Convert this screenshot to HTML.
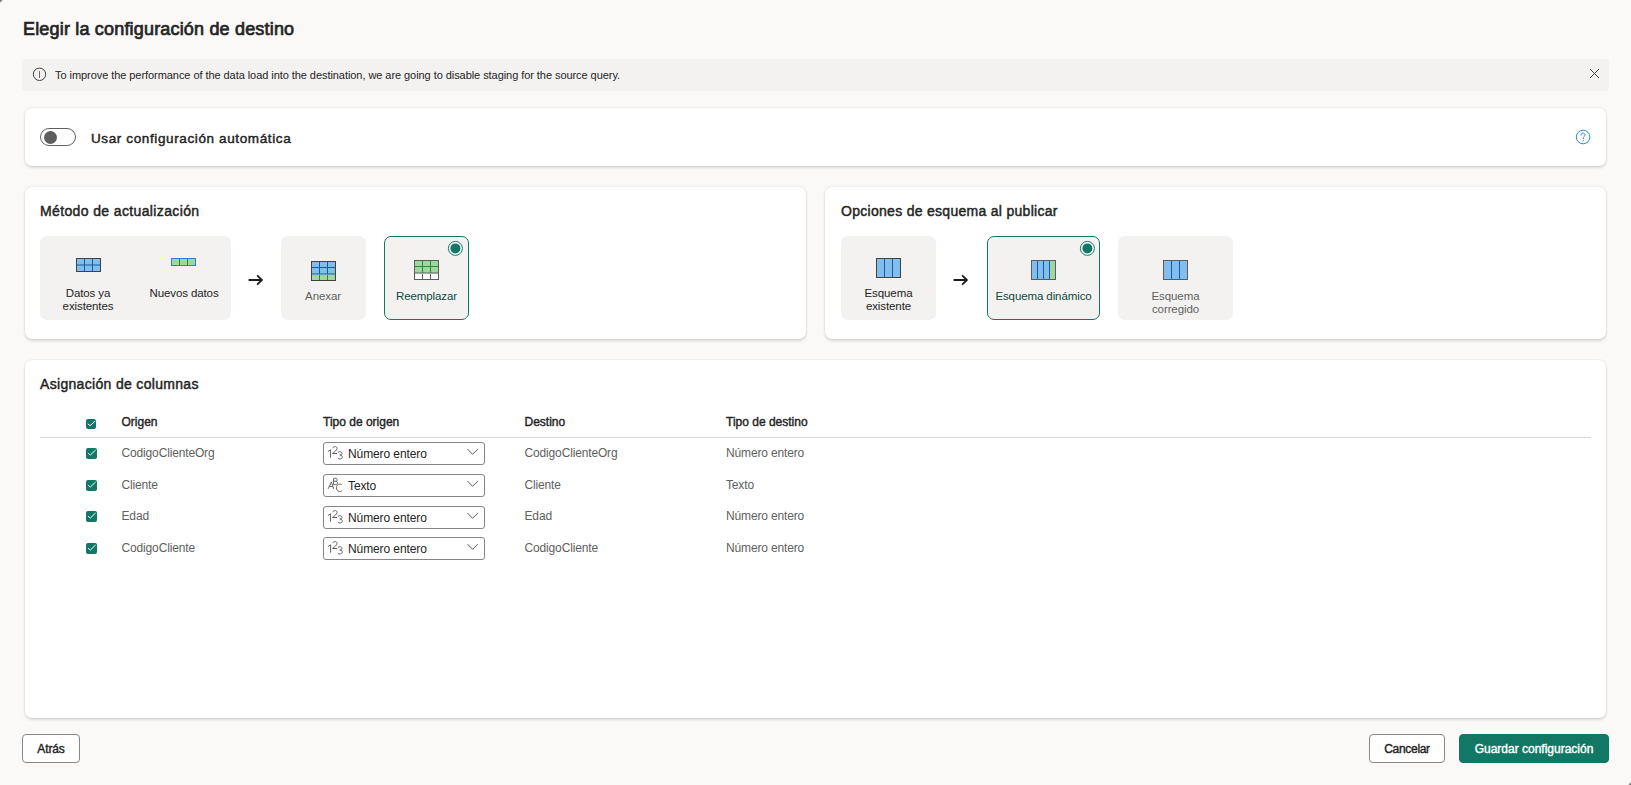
<!DOCTYPE html>
<html><head><meta charset="utf-8">
<style>
*{box-sizing:border-box;margin:0;padding:0}
html,body{width:1631px;height:785px;overflow:hidden;background:#faf9f8;font-family:"Liberation Sans",sans-serif;color:#242424}
.abs{position:absolute}
.sb{-webkit-text-stroke:0.45px currentColor}
svg.abs{display:block}
.t{position:absolute;white-space:nowrap;line-height:1}
.card{position:absolute;background:#fff;border-radius:7px;box-shadow:0 0 2px rgba(0,0,0,.14),0 2px 3px rgba(0,0,0,.12)}
.tile{position:absolute;background:#f3f2f1;border-radius:7px}
.tile.sel{border:1px solid #117865}
.lbl{position:absolute;font-size:11.5px;letter-spacing:-0.1px;line-height:13px;text-align:center;white-space:nowrap}
.hdr{position:absolute;font-size:12px;-webkit-text-stroke:0.4px currentColor;color:#242424;white-space:nowrap;line-height:1}
.cell{position:absolute;font-size:12px;letter-spacing:-0.15px;color:#616161;white-space:nowrap;line-height:1}
.dd{position:absolute;left:323px;width:162px;height:23px;border:1px solid #858585;border-radius:3px;background:#fff}
.ddt{position:absolute;left:24px;top:5px;font-size:12px;letter-spacing:-0.1px;line-height:1;color:#242424;white-space:nowrap}
.btn{position:absolute;height:29px;border:1px solid #8a8886;border-radius:4px;background:#fff;font-size:12px;-webkit-text-stroke:0.4px currentColor;display:flex;align-items:center;justify-content:center;color:#242424}
</style></head>
<body>
<!-- title -->
<div class="t" style="left:23px;top:20.3px;font-size:18px;letter-spacing:0.18px;-webkit-text-stroke:0.7px #242424">Elegir la configuración de destino</div>

<!-- info bar -->
<div class="abs" style="left:22px;top:59px;width:1587px;height:32px;background:#f3f2f1;border-radius:3px"></div>
<svg class="abs" style="left:32px;top:67px" width="15" height="15" viewBox="0 0 15 15"><circle cx="7.5" cy="7.3" r="6.2" fill="none" stroke="#424242" stroke-width="1"/><line x1="7.5" y1="4" x2="7.5" y2="11" stroke="#6b4f6b" stroke-width="0.9"/></svg>
<div class="t" style="left:55px;top:70.2px;font-size:11px;color:#242424;letter-spacing:-0.06px">To improve the performance of the data load into the destination, we are going to disable staging for the source query.</div>
<svg class="abs" style="left:1589px;top:68px" width="11" height="11" viewBox="0 0 11 11"><path d="M1 1L10 10M10 1L1 10" stroke="#424242" stroke-width="1"/></svg>

<!-- card 1 -->
<div class="card" style="left:25px;top:108px;width:1581px;height:58px"></div>
<div class="abs" style="left:40px;top:128px;width:36px;height:18px;border:1px solid #616161;border-radius:9px;background:#fff"></div>
<div class="abs" style="left:44px;top:131px;width:13px;height:13px;border-radius:50%;background:#5f5e5d"></div>
<div class="t" style="left:91px;top:132px;font-size:13.5px;letter-spacing:0.62px;-webkit-text-stroke:0.45px #242424">Usar configuración automática</div>
<svg class="abs" style="left:1575px;top:129.3px" width="16" height="16" viewBox="0 0 16 16"><circle cx="8.1" cy="8" r="6.8" fill="none" stroke="#2b88d8" stroke-width="1"/><path d="M6.1 6.1C6.1 4.9 7 4.1 8.1 4.1C9.2 4.1 10 4.9 10 5.9C10 7.3 8.3 7.6 8.3 9.5" fill="none" stroke="#2b88d8" stroke-width="1" stroke-linecap="round"/><circle cx="8.3" cy="11.6" r="0.65" fill="#2b88d8"/></svg>

<!-- card 2 -->
<div class="card" style="left:25px;top:187px;width:781px;height:152px"></div>
<div class="t sb" style="left:40px;top:204px;font-size:14px;letter-spacing:0.37px">Método de actualización</div>
<div class="tile" style="left:40px;top:236px;width:191px;height:84px"></div>
<svg class="abs" style="left:76px;top:258px" width="25" height="14" viewBox="0 0 25 14"><rect x="0.5" y="0.5" width="24" height="13" fill="#83bdec" stroke="#424242"/><path d="M8.5 1V13M16.5 1V13M1 7H24" stroke="#0f5cb0" stroke-width="1"/></svg>
<svg class="abs" style="left:171px;top:258px" width="25" height="8" viewBox="0 0 25 8"><rect x="0.5" y="0.5" width="24" height="7" fill="#9fd89f" stroke="#2f7fd0"/><path d="M8.5 1V7M16.5 1V7" stroke="#2e8b3e" stroke-width="1"/></svg>
<div class="lbl" style="left:48px;width:80px;top:287.2px;color:#242424">Datos ya<br>existentes</div>
<div class="lbl" style="left:144px;width:80px;top:287.2px;color:#242424">Nuevos datos</div>
<svg class="abs" style="left:248px;top:274px" width="16" height="12" viewBox="0 0 16 12"><path d="M0.6 6H13.4M9.1 1.4L13.9 6L9.1 10.6" fill="none" stroke="#1b1b1b" stroke-width="1.8"/></svg>
<div class="tile" style="left:281px;top:236px;width:85px;height:84px"></div>
<svg class="abs" style="left:311px;top:261px" width="25" height="20" viewBox="0 0 25 20"><rect x="0.5" y="0.5" width="24" height="13" fill="#83bdec"/><rect x="0.5" y="13.5" width="24" height="6" fill="#9fd89f"/><path d="M8.5 1V13M16.5 1V13M1 6.5H24M1 13H24" stroke="#0f5cb0" stroke-width="1"/><path d="M8.5 14V19M16.5 14V19" stroke="#2e8b3e" stroke-width="1"/><rect x="0.5" y="0.5" width="24" height="19" fill="none" stroke="#424242"/></svg>
<div class="lbl" style="left:283px;width:80px;top:289.5px;color:#616161">Anexar</div>
<div class="tile sel" style="left:384px;top:236px;width:85px;height:84px"></div>
<svg class="abs" style="left:447px;top:240px" width="17" height="17" viewBox="0 0 17 17"><circle cx="8.4" cy="8.4" r="7" fill="#fff" stroke="#117865" stroke-width="1"/><circle cx="8.4" cy="8.4" r="5" fill="#117865"/></svg>
<svg class="abs" style="left:414px;top:260px" width="25" height="20" viewBox="0 0 25 20"><rect x="0.5" y="0.5" width="24" height="13" fill="#9fd89f"/><rect x="0.5" y="13.5" width="24" height="6" fill="#fafafa"/><path d="M8.5 1V13M16.5 1V13M1 6.5H24" stroke="#2e8b3e" stroke-width="1"/><path d="M1 13H24M8.5 14V19M16.5 14V19" stroke="#616161" stroke-width="1"/><rect x="0.5" y="0.5" width="24" height="19" fill="none" stroke="#5c5c5c"/></svg>
<div class="lbl" style="left:386.5px;width:80px;top:289.5px;color:#0c4a3e">Reemplazar</div>

<!-- card 3 -->
<div class="card" style="left:825px;top:187px;width:781px;height:152px"></div>
<div class="t sb" style="left:841px;top:204px;font-size:14px;letter-spacing:0.29px">Opciones de esquema al publicar</div>
<div class="tile" style="left:841px;top:236px;width:95px;height:84px"></div>
<svg class="abs" style="left:876px;top:258px" width="25" height="20" viewBox="0 0 25 20"><rect x="0.5" y="0.5" width="24" height="19" fill="#83bdec" stroke="#424242"/><path d="M8.5 1V19M16.5 1V19" stroke="#0f5cb0" stroke-width="1"/></svg>
<div class="lbl" style="left:848.5px;width:80px;top:287.2px;color:#242424">Esquema<br>existente</div>
<svg class="abs" style="left:953px;top:274px" width="16" height="12" viewBox="0 0 16 12"><path d="M0.6 6H13.4M9.1 1.4L13.9 6L9.1 10.6" fill="none" stroke="#1b1b1b" stroke-width="1.8"/></svg>
<div class="tile sel" style="left:987px;top:236px;width:113px;height:84px"></div>
<svg class="abs" style="left:1078.5px;top:240px" width="17" height="17" viewBox="0 0 17 17"><circle cx="8.4" cy="8.4" r="7" fill="#fff" stroke="#117865" stroke-width="1"/><circle cx="8.4" cy="8.4" r="5" fill="#117865"/></svg>
<svg class="abs" style="left:1031px;top:260px" width="25" height="20" viewBox="0 0 25 20"><rect x="0.5" y="0.5" width="24" height="19" fill="#83bdec"/><rect x="18.5" y="0.5" width="6" height="19" fill="#9fd89f"/><path d="M6.5 1V19M12.5 1V19M18.5 1V19" stroke="#0f5cb0" stroke-width="1"/><rect x="0.5" y="0.5" width="24" height="19" fill="none" stroke="#5c5c5c"/></svg>
<div class="lbl" style="left:993.5px;width:100px;top:289.5px;color:#0c4a3e">Esquema dinámico</div>
<div class="tile" style="left:1118px;top:236px;width:115px;height:84px"></div>
<svg class="abs" style="left:1163px;top:260px" width="25" height="20" viewBox="0 0 25 20"><rect x="0.5" y="0.5" width="24" height="19" fill="#83bdec" stroke="#5c5c5c"/><path d="M8.5 1V19M16.5 1V19" stroke="#0f5cb0" stroke-width="1"/></svg>
<div class="lbl" style="left:1135.5px;width:80px;top:290.3px;color:#616161">Esquema<br>corregido</div>

<!-- card 4 -->
<div class="card" style="left:25px;top:360px;width:1581px;height:358px"></div>
<div class="t sb" style="left:40px;top:377px;font-size:14px;letter-spacing:0.32px">Asignación de columnas</div>

<div class="hdr" style="left:121.5px;top:415.8px">Origen</div>
<div class="hdr" style="left:323px;top:415.8px">Tipo de origen</div>
<div class="hdr" style="left:524.5px;top:415.8px">Destino</div>
<div class="hdr" style="left:726px;top:415.8px">Tipo de destino</div>
<div class="abs" style="left:40px;top:437px;width:1551px;height:1px;background:#d6d6d6"></div>
<div class="abs" style="left:86px;top:419px;width:10px;height:10px;background:#117865;border-radius:2px;overflow:hidden"><svg width="10" height="10" viewBox="0 0 10 10" style="display:block"><path d="M1.8 4.9L4.2 6.7L9.3 1.9" fill="none" stroke="#fff" stroke-width="1"/></svg></div>
<div class="abs" style="left:86px;top:448.0px;width:11px;height:11px;background:#117865;border-radius:2px"><svg width="11" height="11" viewBox="0 0 11 11" style="display:block"><path d="M1.9 5L4.3 7.1L9.6 2" fill="none" stroke="#fff" stroke-width="1"/></svg></div>
<div class="cell" style="left:121.5px;top:446.9px">CodigoClienteOrg</div>
<div class="dd" style="top:442.2px"><svg class="abs" style="left:-1px;top:-1px" width="24" height="22" viewBox="0 0 24 22" fill="none" stroke="#5c5c5c" stroke-width="0.95"><path d="M4.9 9.6L7.6 7.8V15.7"/><path d="M9.6 6.2C10.2 5 11.3 4.6 12.2 4.6C13.3 4.6 14 5.4 14 6.4C14 7.4 13.4 8.1 12.6 8.9L9.5 11.5H14.2"/><path d="M15 10.4C15.6 9.9 16.3 9.7 17 9.7C18.2 9.7 19 10.4 19 11.3C19 12.3 18.1 13 16.7 13C18.3 13 19.3 13.8 19.3 14.9C19.3 16.1 18.3 17 16.9 17C16.1 17 15.4 16.8 14.9 16.4"/></svg><div class="ddt">Número entero</div><svg class="abs" style="left:143px;top:5.3px" width="12" height="8" viewBox="0 0 12 8"><path d="M0.5 1.1L5.6 6.3L10.8 1.1" fill="none" stroke="#424242" stroke-width="0.9"/></svg></div>
<div class="cell" style="left:524.5px;top:446.9px">CodigoClienteOrg</div>
<div class="cell" style="left:726px;top:446.9px">Número entero</div>
<div class="abs" style="left:86px;top:479.6px;width:11px;height:11px;background:#117865;border-radius:2px"><svg width="11" height="11" viewBox="0 0 11 11" style="display:block"><path d="M1.9 5L4.3 7.1L9.6 2" fill="none" stroke="#fff" stroke-width="1"/></svg></div>
<div class="cell" style="left:121.5px;top:478.6px">Cliente</div>
<div class="dd" style="top:473.8px"><svg class="abs" style="left:-1px;top:-1px" width="24" height="22" viewBox="0 0 24 22" fill="none" stroke="#5c5c5c" stroke-width="0.95"><path d="M5.1 14.85L8.4 7.95L10.7 14.85M6.3 12.4H10"/><path d="M10.6 10.6V4.3H12.5C13.6 4.3 14.2 4.9 14.2 5.8C14.2 6.7 13.5 7.3 12.5 7.3H10.6M12.5 7.3C13.8 7.3 14.6 8 14.6 9C14.6 10 13.8 10.6 12.7 10.6H10.6"/><path d="M18.7 10.6C18.2 10.2 17.5 10.1 16.8 10.1C14.8 10.1 13.4 11.6 13.4 13.8C13.4 16 14.8 17.5 16.7 17.5C17.5 17.5 18.3 17.3 18.9 16.9"/></svg><div class="ddt">Texto</div><svg class="abs" style="left:143px;top:5.3px" width="12" height="8" viewBox="0 0 12 8"><path d="M0.5 1.1L5.6 6.3L10.8 1.1" fill="none" stroke="#424242" stroke-width="0.9"/></svg></div>
<div class="cell" style="left:524.5px;top:478.6px">Cliente</div>
<div class="cell" style="left:726px;top:478.6px">Texto</div>
<div class="abs" style="left:86px;top:511.3px;width:11px;height:11px;background:#117865;border-radius:2px"><svg width="11" height="11" viewBox="0 0 11 11" style="display:block"><path d="M1.9 5L4.3 7.1L9.6 2" fill="none" stroke="#fff" stroke-width="1"/></svg></div>
<div class="cell" style="left:121.5px;top:510.2px">Edad</div>
<div class="dd" style="top:505.5px"><svg class="abs" style="left:-1px;top:-1px" width="24" height="22" viewBox="0 0 24 22" fill="none" stroke="#5c5c5c" stroke-width="0.95"><path d="M4.9 9.6L7.6 7.8V15.7"/><path d="M9.6 6.2C10.2 5 11.3 4.6 12.2 4.6C13.3 4.6 14 5.4 14 6.4C14 7.4 13.4 8.1 12.6 8.9L9.5 11.5H14.2"/><path d="M15 10.4C15.6 9.9 16.3 9.7 17 9.7C18.2 9.7 19 10.4 19 11.3C19 12.3 18.1 13 16.7 13C18.3 13 19.3 13.8 19.3 14.9C19.3 16.1 18.3 17 16.9 17C16.1 17 15.4 16.8 14.9 16.4"/></svg><div class="ddt">Número entero</div><svg class="abs" style="left:143px;top:5.3px" width="12" height="8" viewBox="0 0 12 8"><path d="M0.5 1.1L5.6 6.3L10.8 1.1" fill="none" stroke="#424242" stroke-width="0.9"/></svg></div>
<div class="cell" style="left:524.5px;top:510.2px">Edad</div>
<div class="cell" style="left:726px;top:510.2px">Número entero</div>
<div class="abs" style="left:86px;top:542.9px;width:11px;height:11px;background:#117865;border-radius:2px"><svg width="11" height="11" viewBox="0 0 11 11" style="display:block"><path d="M1.9 5L4.3 7.1L9.6 2" fill="none" stroke="#fff" stroke-width="1"/></svg></div>
<div class="cell" style="left:121.5px;top:541.9px">CodigoCliente</div>
<div class="dd" style="top:537.1px"><svg class="abs" style="left:-1px;top:-1px" width="24" height="22" viewBox="0 0 24 22" fill="none" stroke="#5c5c5c" stroke-width="0.95"><path d="M4.9 9.6L7.6 7.8V15.7"/><path d="M9.6 6.2C10.2 5 11.3 4.6 12.2 4.6C13.3 4.6 14 5.4 14 6.4C14 7.4 13.4 8.1 12.6 8.9L9.5 11.5H14.2"/><path d="M15 10.4C15.6 9.9 16.3 9.7 17 9.7C18.2 9.7 19 10.4 19 11.3C19 12.3 18.1 13 16.7 13C18.3 13 19.3 13.8 19.3 14.9C19.3 16.1 18.3 17 16.9 17C16.1 17 15.4 16.8 14.9 16.4"/></svg><div class="ddt">Número entero</div><svg class="abs" style="left:143px;top:5.3px" width="12" height="8" viewBox="0 0 12 8"><path d="M0.5 1.1L5.6 6.3L10.8 1.1" fill="none" stroke="#424242" stroke-width="0.9"/></svg></div>
<div class="cell" style="left:524.5px;top:541.9px">CodigoCliente</div>
<div class="cell" style="left:726px;top:541.9px">Número entero</div>
<!-- footer -->
<div class="btn" style="left:22px;top:734px;width:58px;letter-spacing:-0.15px">Atrás</div>
<div class="btn" style="left:1369px;top:734px;width:76px;letter-spacing:-0.3px">Cancelar</div>
<div class="btn" style="left:1459px;top:734px;width:150px;background:#117865;border-color:#117865;color:#fff">Guardar configuración</div>
<div class="abs" style="left:0;top:0;width:4px;height:4px;background:radial-gradient(circle at 0 0,#6b6f7c 0,#7a7d88 1.2px,rgba(250,249,248,0) 3px)"></div>
<div class="abs" style="left:1627px;top:781px;width:4px;height:4px;background:radial-gradient(circle at 100% 100%,#6b6b6b 0,#7a7a7a 1.2px,rgba(250,249,248,0) 3px)"></div>
</body></html>
